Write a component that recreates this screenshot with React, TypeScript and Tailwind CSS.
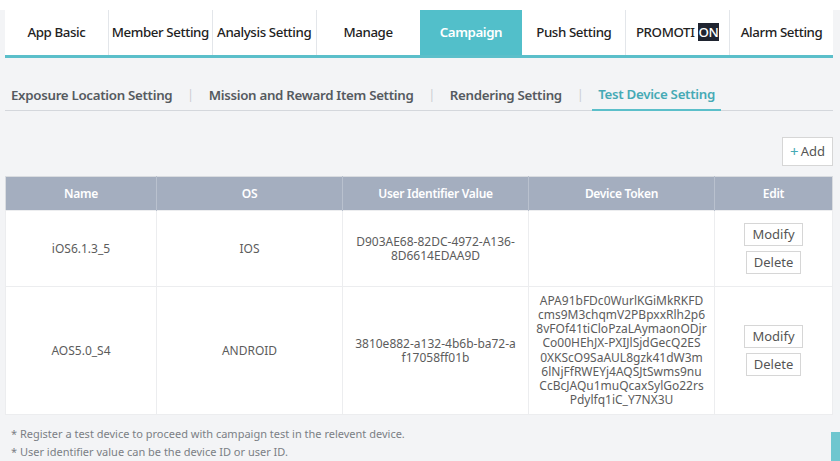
import React from "react";

const tabs = ["App Basic", "Member Setting", "Analysis Setting", "Manage", "Campaign", "Push Setting", "PROMOTION", "Alarm Setting"];
const subs = ["Exposure Location Setting", "Mission and Reward Item Setting", "Rendering Setting", "Test Device Setting"];

const token = ["APA91bFDc0WurlKGiMkRKFD", "cms9M3chqmV2PBpxxRlh2p6", "8vFOf41tiCloPzaLAymaonODjr", "Co00HEhJX-PXIJlSjdGecQ2ES", "0XKScO9SaAUL8gzk41dW3m", "6lNjFfRWEYj4AQSJtSwms9nu", "CcBcJAQu1muQcaxSylGo22rs", "Pdylfq1iC_Y7NX3U"];

function Btn({ children }: { children: React.ReactNode }) {
  return (
    <div className="border border-[#d6d6d6] bg-white px-[7px] h-[23px] flex items-center text-[13px] text-[#555]">{children}</div>
  );
}

export default function App() {
  const font = { fontFamily: '"Noto Sans", "Open Sans", sans-serif' };
  return (
    <div className="w-[840px] h-[461px] bg-[#f3f4f6] overflow-hidden relative" style={font}>
      <div className="h-[10px] bg-white" />
      <div className="flex ml-[5px] w-[828px] border-b-[3px] border-[#5bbfca] bg-white">
        {tabs.map((t, i) => (
          <div
            key={t}
            className={`flex-1 h-[45px] flex items-center justify-center text-[13.3px] tracking-[-0.4px] whitespace-nowrap pt-[1px] ${i > 0 && i !== 4 && i !== 5 ? "border-l border-[#e3e6ea]" : ""} ${i === 4 ? "bg-[#52bfca] text-white font-semibold" : "text-[#222] font-medium"}`}
          >
            {t === "PROMOTION" ? (
              <span>PROMOTI <span className="bg-[#1f2430] text-white px-[1px]">ON</span></span>
            ) : t}
          </div>
        ))}
      </div>
      <div className="ml-[5px] w-[828px] mt-[22px] border-b border-[#d4d7dc] flex items-center h-[31px] text-[13.3px] font-semibold tracking-[-0.3px]">
        {subs.map((s, i) => (
          <React.Fragment key={s}>
            {i > 0 && <span className="text-[#c9ccd1] font-normal text-[12px] mx-[15px]">|</span>}
            <span className={`${i === 0 ? "ml-[6px]" : ""} h-full flex items-center relative pt-[1px] ${i === 3 ? "text-[#45aab5] border-b-2 border-[#5bbfca] px-[6px] -mx-[6px] mt-[1px]" : "text-[#555a60]"}`}>{s}</span>
          </React.Fragment>
        ))}
      </div>
      <div className="flex justify-end w-[833px] mt-[26px]">
        <div className="border border-[#d6d6d6] bg-white h-[29px] px-[7px] flex items-center text-[13px] text-[#555]">
          <span className="text-[#45aab5] text-[15px] mr-[2px] leading-none">+</span>Add
        </div>
      </div>
      <table className="ml-[5px] w-[828px] mt-[10px] border border-[#d9dce0] border-collapse text-[12px] text-[#5c5c5c]">
        <colgroup>
          <col className="w-[151px]" />
          <col className="w-[186px]" />
          <col className="w-[186px]" />
          <col className="w-[186px]" />
          <col />
        </colgroup>
        <thead>
          <tr className="bg-[#a4aebf] text-white h-[34px] text-[12px] tracking-[-0.3px]">
            {["Name", "OS", "User Identifier Value", "Device Token", "Edit"].map((h) => (
              <th key={h} className="border-l border-[#b9c1ce] first:border-l-0 font-semibold">{h}</th>
            ))}
          </tr>
        </thead>
        <tbody className="bg-white">
          <tr className="h-[76px] text-center">
            <td className="border border-[#ecedef]">iOS6.1.3_5</td>
            <td className="border border-[#ecedef]">IOS</td>
            <td className="border border-[#ecedef] leading-[14px] px-[6px]">D903AE68-82DC-4972-A136-<br />8D6614EDAA9D</td>
            <td className="border border-[#ecedef]"></td>
            <td className="border border-[#ecedef]">
              <div className="flex flex-col items-center gap-[5px]">
                <Btn>Modify</Btn>
                <Btn>Delete</Btn>
              </div>
            </td>
          </tr>
          <tr className="h-[128px] text-center">
            <td className="border border-[#ecedef]">AOS5.0_S4</td>
            <td className="border border-[#ecedef]">ANDROID</td>
            <td className="border border-[#ecedef] leading-[14px] px-[6px]">3810e882-a132-4b6b-ba72-a<br />f17058ff01b</td>
            <td className="border border-[#ecedef] leading-[14.2px] py-[6px]">
              {token.map((l) => (<div key={l}>{l}</div>))}
            </td>
            <td className="border border-[#ecedef]">
              <div className="flex flex-col items-center gap-[5px]">
                <Btn>Modify</Btn>
                <Btn>Delete</Btn>
              </div>
            </td>
          </tr>
        </tbody>
      </table>
      <div className="ml-[11px] mt-[10px] text-[11px] text-[#7b7f85] leading-[18px]">
        <div>* Register a test device to proceed with campaign test in the relevent device.</div>
        <div>* User identifier value can be the device ID or user ID.</div>
      </div>
      <div className="absolute left-[831px] top-[432px] w-[9px] h-[29px] bg-[#6fc6cf]" />
    </div>
  );
}
